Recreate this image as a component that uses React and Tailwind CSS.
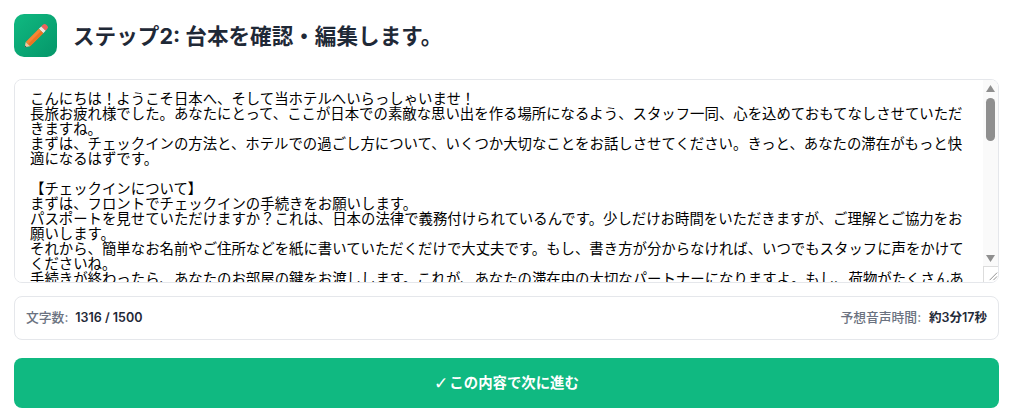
const SCRIPT = `こんにちは！ようこそ日本へ、そして当ホテルへいらっしゃいませ！
長旅お疲れ様でした。あなたにとって、ここが日本での素敵な思い出を作る場所になるよう、スタッフ一同、心を込めておもてなしさせていただきますね。
まずは、チェックインの方法と、ホテルでの過ごし方について、いくつか大切なことをお話しさせてください。きっと、あなたの滞在がもっと快適になるはずです。

【チェックインについて】
まずは、フロントでチェックインの手続きをお願いします。
パスポートを見せていただけますか？これは、日本の法律で義務付けられているんです。少しだけお時間をいただきますが、ご理解とご協力をお願いします。
それから、簡単なお名前やご住所などを紙に書いていただくだけで大丈夫です。もし、書き方が分からなければ、いつでもスタッフに声をかけてくださいね。
手続きが終わったら、あなたのお部屋の鍵をお渡しします。これが、あなたの滞在中の大切なパートナーになりますよ。もし、荷物がたくさんあれば、スタッフがお部屋までお運びしますので、遠慮なくお申し付けください。

【お部屋でのお願い】
日本のホテルでは、お部屋の中で靴を脱いでスリッパに履き替えることが多いです。
お部屋の中は禁煙となっておりますので、おタバコは決められた場所でお願いします。
夜の十時を過ぎたら、周りのお客様のために、少しだけ静かにお過ごしくださいね。

【お風呂について】
大浴場をご利用の際は、湯船に入る前に体を洗っていただけますか？
タオルは湯船の中に入れないようにお願いします。
日本のお風呂は、とても気持ちがいいですよ。ぜひ、ゆっくり疲れを癒してくださいね。

【朝食について】
朝食は、一階のレストランで朝七時から十時までご用意しています。
和食も洋食もありますので、お好きなものを召し上がってください。

【チェックアウトについて】
チェックアウトは、朝十一時までにお願いします。
お部屋の鍵をフロントまでお持ちください。
お荷物を預かることもできますので、お気軽にお声がけください。

何か困ったことがあれば、いつでもフロントにお電話くださいね。
それでは、素敵な時間をお過ごしください！`

const App = () => {
  return (
    <div className="bg-white pl-3.5 pr-[19px] pt-3.5 h-[418px] font-['Inter','Noto_Sans_CJK_JP',sans-serif]">
      {/* Header */}
      <div className="flex items-center gap-4 h-[43px]">
        <div className="w-[43px] h-[43px] rounded-[10px] bg-gradient-to-br from-[#10b981] to-[#059669]">
          <svg width="43" height="43" viewBox="0 0 43 43">
            <g transform="rotate(45 22 22)">
              <path d="M18.9 9.5 Q18.9 6.8 21 6.8 H23 Q25.1 6.8 25.1 9.5 V11.5 H18.9 Z" fill="#f0615c" />
              <rect x="18.9" y="11.5" width="6.2" height="3.4" fill="#f3e3e0" />
              <rect x="18.9" y="14.9" width="6.2" height="18.6" fill="#f58634" />
              <rect x="22" y="14.9" width="3.1" height="18.6" fill="#ea7422" />
              <path d="M18.9 33.5 H25.1 L22 38 Z" fill="#f2c9a0" />
              <path d="M21 36.5 H23 L22 38 Z" fill="#3f3f46" />
            </g>
          </svg>
        </div>
        <h1 className="mt-[2px] text-[21.6px] leading-none font-bold text-[#1f2937]">ステップ2: 台本を確認・編集します。</h1>
      </div>

      {/* Script editor */}
      <div className="relative mt-[22px]">
        <textarea
          defaultValue={SCRIPT}
          className="block w-full h-[204px] pl-[15px] pr-[30px] pt-[11px] pb-2.5 rounded-lg border border-[#e5e7eb] bg-white text-black text-[14.4px] leading-[15px] outline-none resize-none"
        />
        {/* scrollbar drawn over the textarea, the headless browser hides the native one */}
        <div className="absolute right-px top-px bottom-px w-[15px] flex flex-col overflow-hidden rounded-r-[7px]">
          <div className="flex-1 bg-[#fafafa] flex flex-col items-center pt-[5px]">
            <svg width="9" height="7" viewBox="0 0 9 7"><path d="M4.5 0 L9 7 H0 Z" fill="#8f8f8f" /></svg>
            <div className="w-[9px] h-[43px] mt-[6px] rounded-full bg-[#8f8f8f]" />
            <svg className="mt-auto mb-[4px]" width="9" height="7" viewBox="0 0 9 7"><path d="M0 0 H9 L4.5 7 Z" fill="#8f8f8f" /></svg>
          </div>
          <svg width="16" height="16" viewBox="0 0 16 16" className="bg-white border-t border-l border-[#dcdcdc] shrink-0">
            <path d="M14 6 L6 14 M14 10 L10 14" stroke="#8a8a8a" strokeWidth="1" />
          </svg>
        </div>
      </div>

      {/* Stats */}
      <div className="flex items-center justify-between h-11 mt-[13px] pl-[11px] pr-[11px] rounded-lg border border-[#e5e7eb] bg-white text-[12.8px]">
        <div className="flex items-center gap-[7px]">
          <span className="text-[#6b7280] font-medium">文字数:</span>
          <span className="text-[#1f2937] font-semibold text-[12.5px]">1316 / 1500</span>
        </div>
        <div className="flex items-center gap-[8px]">
          <span className="text-[#6b7280] font-medium">予想音声時間:</span>
          <span className="text-[#1f2937] font-semibold text-[12.5px]">約3分17秒</span>
        </div>
      </div>

      {/* Next button */}
      <button className="flex items-center justify-center gap-px w-full h-[50px] mt-[18px] rounded-lg bg-[#10b981] text-white text-[14.4px] font-bold">
        <span className="font-['DejaVu_Sans'] text-[17px] leading-none">✓</span>
        <span>この内容で次に進む</span>
      </button>
    </div>
  )
}

export default App
